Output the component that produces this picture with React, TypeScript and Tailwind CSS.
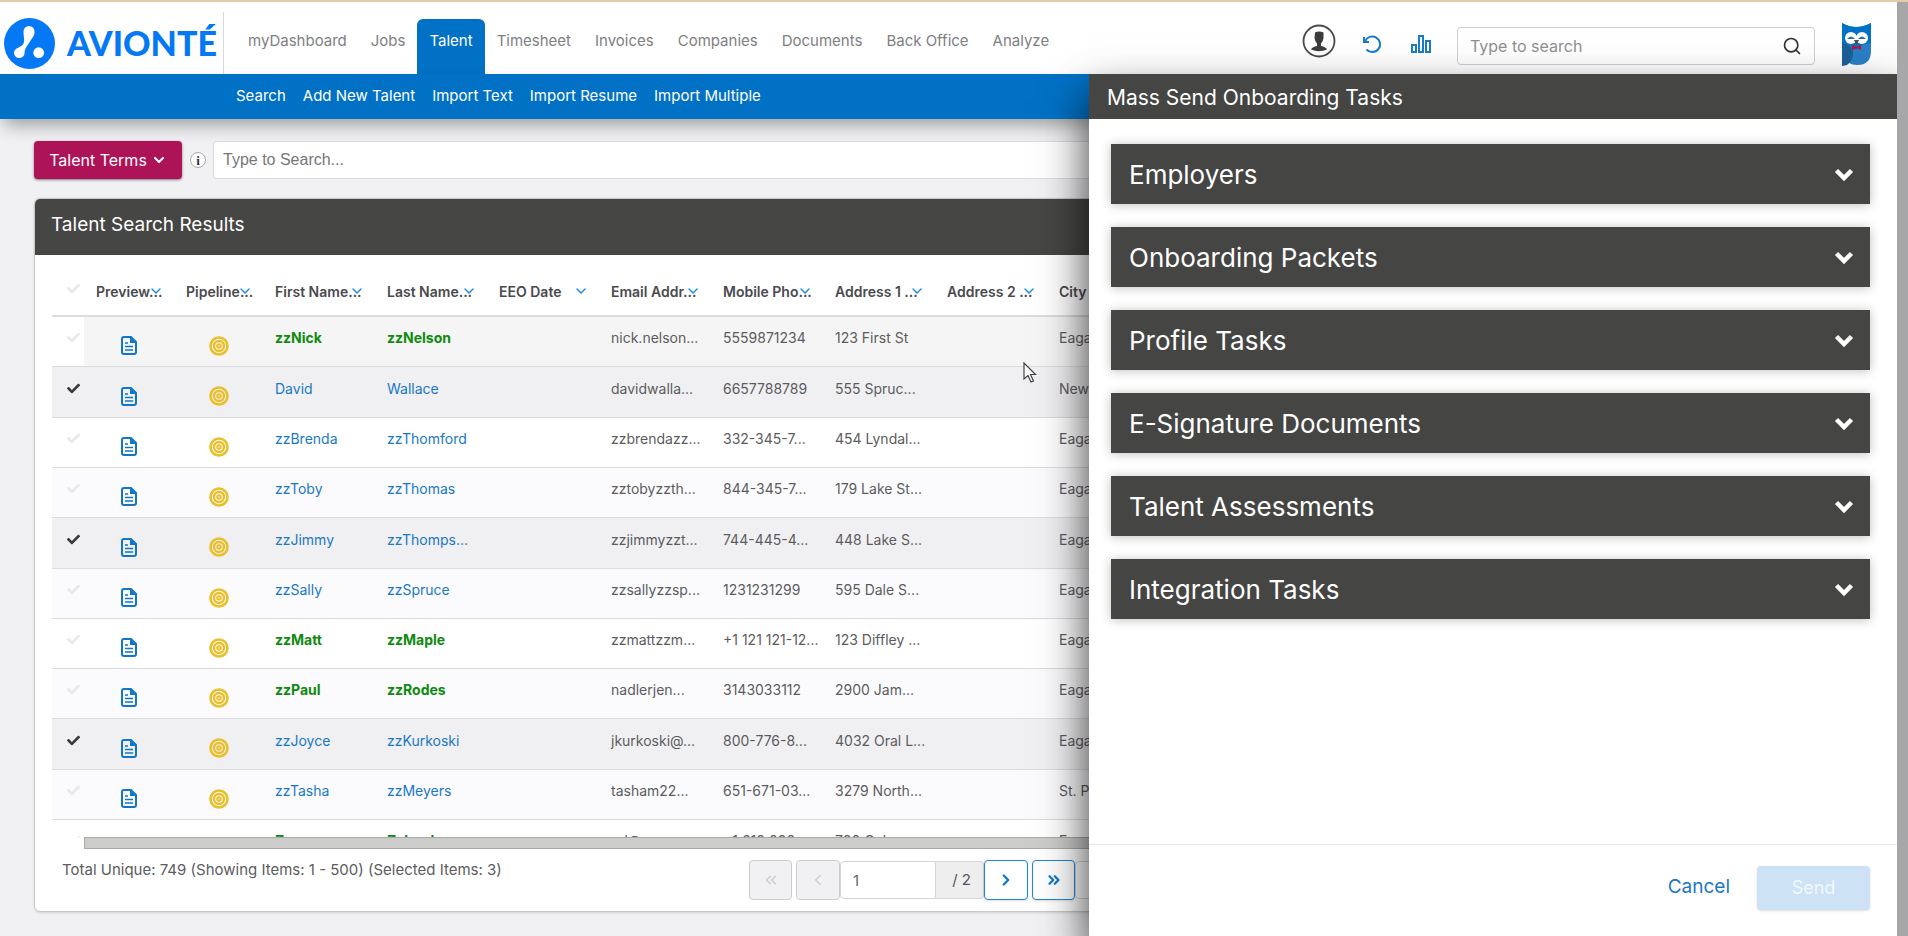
import { ChevronDown, ChevronLeft, ChevronRight, ChevronsLeft, ChevronsRight, Search } from 'lucide-react';
import { FaCheck } from 'react-icons/fa';

interface Talent {
  first: string;
  last: string;
  email: string;
  phone: string;
  address: string;
  city: string;
  selected?: boolean;
  highlighted?: boolean;
}

const navItems = ['myDashboard', 'Jobs', 'Talent', 'Timesheet', 'Invoices', 'Companies', 'Documents', 'Back Office', 'Analyze'];

const subNavItems = ['Search', 'Add New Talent', 'Import Text', 'Import Resume', 'Import Multiple'];

const columns = [
  'Preview...',
  'Pipeline...',
  'First Name...',
  'Last Name...',
  'EEO Date',
  'Email Addr...',
  'Mobile Pho...',
  'Address 1 ...',
  'Address 2 ...',
  'City',
];

const talents: Talent[] = [
  { first: 'zzNick', last: 'zzNelson', email: 'nick.nelson...', phone: '5559871234', address: '123 First St', city: 'Eagan', highlighted: true },
  { first: 'David', last: 'Wallace', email: 'davidwalla...', phone: '6657788789', address: '555 Spruc...', city: 'New York', selected: true },
  { first: 'zzBrenda', last: 'zzThomford', email: 'zzbrendazz...', phone: '332-345-7...', address: '454 Lyndal...', city: 'Eagan' },
  { first: 'zzToby', last: 'zzThomas', email: 'zztobyzzth...', phone: '844-345-7...', address: '179 Lake St...', city: 'Eagan' },
  { first: 'zzJimmy', last: 'zzThomps...', email: 'zzjimmyzzt...', phone: '744-445-4...', address: '448 Lake S...', city: 'Eagan', selected: true },
  { first: 'zzSally', last: 'zzSpruce', email: 'zzsallyzzsp...', phone: '1231231299', address: '595 Dale S...', city: 'Eagan' },
  { first: 'zzMatt', last: 'zzMaple', email: 'zzmattzzm...', phone: '+1 121 121-12...', address: '123 Diffley ...', city: 'Eagan', highlighted: true },
  { first: 'zzPaul', last: 'zzRodes', email: 'nadlerjen...', phone: '3143033112', address: '2900 Jam...', city: 'Eagan', highlighted: true },
  { first: 'zzJoyce', last: 'zzKurkoski', email: 'jkurkoski@...', phone: '800-776-8...', address: '4032 Oral L...', city: 'Eagan', selected: true },
  { first: 'zzTasha', last: 'zzMeyers', email: 'tasham22...', phone: '651-671-03...', address: '3279 North...', city: 'St. Paul' },
  { first: 'Zzgeorge', last: 'Zzlund', email: 'ed@zz...', phone: '+1 610 090...', address: '700 Oak...', city: 'Eagan', highlighted: true },
];

const taskSections = [
  'Employers',
  'Onboarding Packets',
  'Profile Tasks',
  'E-Signature Documents',
  'Talent Assessments',
  'Integration Tasks',
];

function AvionteLogo() {
  return (
    <a href="#home" aria-label="Avionté home" className="flex h-[62px] shrink-0 items-center border-r border-[#d9d9dc] pl-1 pr-2">
      <svg viewBox="0 0 51 51" className="size-[51px] shrink-0" aria-hidden="true">
        <circle cx="25.5" cy="25.5" r="25.5" fill="#0578f5" />
        <path
          d="M19.5 13.5 C19.5 19 21 22 19.5 25.5 C18 29.5 10 29.5 10 34.7 A5.3 5.3 0 0 0 20.6 34.7 C20.6 30 24 27 27 22 C30 18 30.7 16 30.5 13.5 A5.5 5.5 0 0 0 19.5 13.5 Z"
          fill="#fff"
        />
        <circle cx="34.7" cy="34.7" r="5.4" fill="#fff" />
      </svg>
      <span className="ml-3 w-[148px] font-['Lato'] text-[34px] leading-none font-black text-[#0578f5]">AVIONTÉ</span>
    </a>
  );
}

function OwlIcon() {
  return (
    <svg viewBox="0 0 31 43" className="h-[43px] w-[31px]" aria-hidden="true">
      <path d="M1 0 Q15 8 30 0 V28 Q30 42 16 42 Q11 42 8 40 L1 43 Z" fill="#2a7fc6" />
      <path d="M1 0 Q15 8 30 0 V20 Q22 20 15 27 Q9 20 1 20 Z" fill="#0072c6" />
      <path d="M1 20 Q10 21 12 28 Q13 37 6 42 L1 43 Z" fill="#1c5f98" />
      <circle cx="10" cy="15" r="6" fill="#fff" />
      <circle cx="21" cy="15" r="6" fill="#fff" />
      <path d="M6 16 Q10 11 14 16 Z M17 16 Q21 11 25 16 Z" fill="#2c6ea6" />
      <path d="M13 17 H18 L15.5 22 Z" fill="#4c4c4c" />
      <path d="M11 22 L15.5 24 L20 22 V27 L15.5 25 L11 27 Z" fill="#c8102e" />
    </svg>
  );
}

function HeaderActions() {
  return (
    <div className="flex shrink-0 items-center pt-3">
      <button type="button" aria-label="Profile" className="mr-[26px] pb-[6px]">
        <svg viewBox="0 0 34 34" className="size-[34px]" aria-hidden="true">
          <circle cx="17" cy="17" r="15.5" fill="#fff" stroke="#4a4a4a" strokeWidth="1.8" />
          <path d="M13 8.5 Q17 6.5 21.5 8.5 L21.5 14 Q21 18 19 19.5 V22 Q24 23 25 25.5 Q17 29 9 25.5 Q10 23 15 22 V19.5 Q13 18 12.5 14 Z" fill="#3c3c3c" />
        </svg>
      </button>
      <button type="button" aria-label="Recent" className="mr-[29px]">
        <svg viewBox="0 0 20 20" className="size-5" fill="none" stroke="#1a7bc9" strokeWidth="2" aria-hidden="true">
          <path d="M2 3 V8 H7" />
          <path d="M3 7.5 A7.8 7.8 0 1 1 4.5 15.5" />
        </svg>
      </button>
      <button type="button" aria-label="Reports" className="mr-[26px]">
        <svg viewBox="0 0 20 18" className="h-[18px] w-5" fill="none" stroke="#1a7bc9" strokeWidth="2" aria-hidden="true">
          <rect x="1" y="10" width="4" height="7" />
          <rect x="8" y="1" width="4" height="16" />
          <rect x="15" y="6" width="4" height="11" />
        </svg>
      </button>
      <div className="mt-1 flex h-[38px] w-[358px] items-center rounded border border-[#cfcfd4] bg-transparent px-3">
        <input
          type="text"
          aria-label="Global search"
          placeholder="Type to search"
          className="min-w-0 flex-1 text-[16px] text-gray-700 outline-none placeholder:text-[#8f8f93]"
        />
        <Search className="size-5 text-[#333]" strokeWidth={2} />
      </div>
      <a href="#help" aria-label="Help" className="ml-[26px]">
        <OwlIcon />
      </a>
    </div>
  );
}

function Header() {
  return (
    <header>
      <div className="flex h-[74px] items-end border-t-2 border-[#e2cda8] bg-white">
        <AvionteLogo />
        <nav aria-label="Main" className="flex min-w-0 flex-1 items-end pl-3">
          {navItems.map((item) => (
            <a
              key={item}
              href={`#${item}`}
              className={
                item === 'Talent'
                  ? 'h-[55px] rounded-t-md bg-[#0071c5] px-3 pt-[10px] text-[15px] leading-6 text-white'
                  : 'h-[55px] px-3 pt-[10px] text-[15px] leading-6 whitespace-nowrap text-[#808083]'
              }
            >
              {item}
            </a>
          ))}
        </nav>
        <div className="mr-9 flex h-full items-center">
          <HeaderActions />
        </div>
      </div>
      <nav aria-label="Talent" className="relative flex h-[45px] items-center gap-[17px] bg-[#0071c5] pl-[236px] text-[15px] text-white shadow-[0_10px_18px_-4px_rgba(0,0,0,0.35)]">
        {subNavItems.map((item) => (
          <a key={item} href={`#${item}`} className="whitespace-nowrap">
            {item}
          </a>
        ))}
      </nav>
    </header>
  );
}

function SearchBar() {
  return (
    <div className="flex items-center">
      <button type="button" className="flex h-[38px] w-[148px] shrink-0 items-center justify-center gap-1 rounded bg-[#ad1457] text-[16px] text-white shadow-sm shadow-black/40">
        Talent Terms
        <ChevronDown className="size-4" strokeWidth={3} />
      </button>
      <button type="button" aria-label="About talent terms" className="mr-[7px] ml-2 flex size-4 shrink-0 items-center justify-center rounded-full border border-[#aaa] bg-white font-['Liberation_Serif'] text-[13px] leading-none font-bold text-[#333]">
        i
      </button>
      <input
        type="text"
        aria-label="Search talent"
        placeholder="Type to Search..."
        className="h-[38px] min-w-0 flex-1 rounded border border-[#dcdcde] bg-white px-[9px] font-['Liberation_Sans',sans-serif] text-[16px] outline-none placeholder:text-[#77777a]"
      />
    </div>
  );
}

function PreviewIcon() {
  return (
    <svg viewBox="0 0 16 19" className="mx-auto mt-2 h-[19px] w-4" fill="none" stroke="#1177c5" strokeWidth="2" aria-hidden="true">
      <path d="M1 3 Q1 1 3 1 H10 L15 6 V16 Q15 18 13 18 H3 Q1 18 1 16 Z" />
      <path d="M9 1 V7 H15 Z" fill="#1177c5" stroke="none" />
      <path d="M4 7 H7 M4 10.5 H12 M4 14 H12" strokeWidth="1.5" />
    </svg>
  );
}

function PipelineIcon() {
  return (
    <svg viewBox="0 0 20 20" className="mx-auto mt-2 size-5" fill="none" stroke="#e9c02c" aria-hidden="true">
      <circle cx="10" cy="10" r="8.5" strokeWidth="2.6" />
      <circle cx="10" cy="10" r="5" strokeWidth="2.4" />
      <circle cx="10" cy="10" r="1.8" strokeWidth="2" />
    </svg>
  );
}

function TalentRow({ talent, index }: { talent: Talent; index: number }) {
  const striped = index % 2 === 1;
  const rowClass = talent.selected ? 'h-[51px] bg-[#f0f0f2]' : striped ? 'h-[50px] bg-[#fbfbfd]' : 'h-[50px] bg-white';
  const cellClass = index === 0 ? 'border-b border-[#dcdce0] bg-[#f5f5f5]' : 'border-b border-[#dcdce0]';
  const nameClass = talent.highlighted ? 'font-bold text-[#0f8a0f]' : 'text-[#1a78c2]';

  return (
    <tr className={rowClass}>
      <td className="border-b border-[#dcdce0] pl-[10px]">
        <label className="flex justify-center">
          <input type="checkbox" defaultChecked={talent.selected} aria-label={`Select ${talent.first}`} className="peer sr-only" />
          <FaCheck className="mb-2 size-[13px] text-[#e8e8ea] peer-checked:text-[#3a3a3a]" />
        </label>
      </td>
      <td className={cellClass}>
        <button type="button" aria-label={`Preview ${talent.first}`} className="block w-full">
          <PreviewIcon />
        </button>
      </td>
      <td className={cellClass}>
        <button type="button" aria-label={`Pipeline for ${talent.first}`} className="block w-full">
          <PipelineIcon />
        </button>
      </td>
      <td className={`${cellClass} px-3 pb-2`}>
        <a href="#talent" className={nameClass}>{talent.first}</a>
      </td>
      <td className={`${cellClass} px-3 pb-2`}>
        <a href="#talent" className={nameClass}>{talent.last}</a>
      </td>
      <td className={cellClass} />
      <td className={`${cellClass} px-3 pb-2`}>{talent.email}</td>
      <td className={`${cellClass} px-3 pb-2`}>{talent.phone}</td>
      <td className={`${cellClass} px-3 pb-2`}>{talent.address}</td>
      <td className={cellClass} />
      <td className={`${cellClass} px-3 pb-2`}>{talent.city}</td>
    </tr>
  );
}

function ResultsTable() {
  return (
    <div className="h-[582px] overflow-hidden">
      <table className="w-full table-fixed border-separate border-spacing-0 text-left text-[14px] whitespace-nowrap text-[#5c5c60]">
        <colgroup>
          <col className="w-8" />
          <col className="w-[90px]" />
          <col className="w-[89px]" />
          {columns.slice(2, 9).map((column) => (
            <col key={column} className="w-28" />
          ))}
          <col />
        </colgroup>
        <thead>
          <tr className="h-[62px]">
            <th className="border-b-2 border-[#dcdce0] pt-[6px] pl-[10px]">
              <FaCheck className="mx-auto size-[13px] text-[#e8e8ea]" />
            </th>
            {columns.map((column) => (
              <th key={column} className="border-b-2 border-[#dcdce0] pt-3 pr-[10px] pl-3 font-semibold text-[#4a4a4d]">
                <span className="flex items-center">
                  <span className="min-w-0 flex-1">{column}</span>
                  <ChevronDown className="size-4 shrink-0 text-[#1a88dd]" strokeWidth={2} />
                </span>
              </th>
            ))}
          </tr>
        </thead>
        <tbody>
          {talents.map((talent, index) => (
            <TalentRow key={talent.first} talent={talent} index={index} />
          ))}
        </tbody>
      </table>
    </div>
  );
}

function Pagination() {
  return (
    <div className="flex items-center">
      <button type="button" disabled aria-label="First page" className="mr-1 flex h-10 w-[43px] items-center justify-center rounded border border-[#ccccd0] bg-[#f1f1f4] text-[#ccccd0]">
        <ChevronsLeft className="size-[18px]" />
      </button>
      <button type="button" disabled aria-label="Previous page" className="flex h-10 w-11 items-center justify-center rounded border border-[#ccccd0] bg-[#f1f1f4] text-[#ccccd0]">
        <ChevronLeft className="size-[18px]" />
      </button>
      <input type="text" aria-label="Page" defaultValue="1" className="h-[38px] w-24 rounded-l border border-[#d4d4d8] px-3 text-[15px] text-[#66666a] outline-none" />
      <span className="flex h-[38px] w-12 items-center justify-end rounded-r border-y border-r border-[#d4d4d8] bg-[#eeeeef] pr-3 text-[15px] text-[#55555a]">/ 2</span>
      <button type="button" aria-label="Next page" className="mr-1 flex h-10 w-11 items-center justify-center rounded border border-[#1a88dd] bg-white text-[#1177c5] shadow-sm">
        <ChevronRight className="size-[18px]" strokeWidth={3} />
      </button>
      <button type="button" aria-label="Last page" className="flex h-10 w-[43px] items-center justify-center rounded border border-[#1a88dd] bg-white text-[#1177c5] shadow-sm">
        <ChevronsRight className="size-[18px]" strokeWidth={3} />
      </button>
      <select aria-label="Items per page" className="h-[38px] w-20 rounded border border-[#d4d4d8] bg-white pl-5">
        <option>500</option>
      </select>
    </div>
  );
}

function ResultsCard() {
  return (
    <section className="mt-[19px] overflow-hidden rounded-md border border-[#c8c8c8] bg-white shadow-sm">
      <h1 className="h-14 bg-[#464644] px-4 text-[19px] leading-[52px] text-white">Talent Search Results</h1>
      <div className="pl-[17px]">
        <ResultsTable />
        <div className="ml-8 h-3 border border-[#aaa] bg-[#cccccb]" />
        <div className="flex items-start justify-between pt-[11px] pb-[11px]">
          <p className="w-[697px] shrink-0 pl-[10px] text-[15px] leading-5 text-[#5c5c60]">
            Total Unique: 749 (Showing Items: 1 - 500) (Selected Items: 3)
          </p>
          <div className="flex-1">
            <Pagination />
          </div>
        </div>
      </div>
    </section>
  );
}

function OnboardingPanel() {
  return (
    <aside aria-label="Mass Send Onboarding Tasks" className="absolute top-[74px] right-[11px] bottom-0 flex w-[808px] flex-col bg-white shadow-[0_24px_44px_rgba(0,0,0,0.8)]">
      <h2 className="h-[45px] shrink-0 bg-[#454543] px-[18px] text-[21px] leading-[48px] text-white">Mass Send Onboarding Tasks</h2>
      <div className="flex flex-1 flex-col gap-[23px] pt-[25px] pr-[27px] pl-[22px]">
        {taskSections.map((section) => (
          <button
            key={section}
            type="button"
            aria-expanded="false"
            className="flex h-[60px] items-center justify-between bg-[#454543] pr-[13px] pl-[18px] text-[26px] text-white shadow-[0_1px_10px_rgba(0,0,0,0.25)]"
          >
            {section}
            <svg viewBox="0 0 26 26" className="size-[26px]" fill="none" stroke="currentColor" strokeWidth="4.5" aria-hidden="true">
              <path d="M5.5 9.5 L13 17 L20.5 9.5" />
            </svg>
          </button>
        ))}
      </div>
      <div className="flex h-[92px] shrink-0 items-center justify-end gap-[27px] border-t border-[#e6e6ee] pr-[27px] pb-[6px] text-[19px]">
        <button type="button" className="text-[#1a78c2]">Cancel</button>
        <button type="button" disabled className="h-11 w-[113px] rounded-sm bg-[#cde2f4] text-[18px] text-[#f2f9ff] shadow-sm">
          Send
        </button>
      </div>
    </aside>
  );
}

export default function App() {
  return (
    <div className="relative h-screen overflow-hidden bg-[#f1f1f4] font-['Inter',sans-serif]">
      <Header />
      <main className="pt-[22px] pr-[34px] pl-[34px]">
        <SearchBar />
        <ResultsCard />
      </main>
      <OnboardingPanel />
      {/* page scrollbar */}
      <div className="absolute top-[2px] right-0 bottom-0 w-[11px] bg-[#a7a7a9]" />
      <svg viewBox="0 0 14 22" className="absolute top-[362px] left-[1023px] h-[22px] w-[14px]" aria-hidden="true">
        <path d="M1 1 V17 L5 13.5 L8 20 L10.5 19 L7.5 12.5 H12.5 Z" fill="#fff" stroke="#444" strokeWidth="1.2" />
      </svg>
    </div>
  );
}
